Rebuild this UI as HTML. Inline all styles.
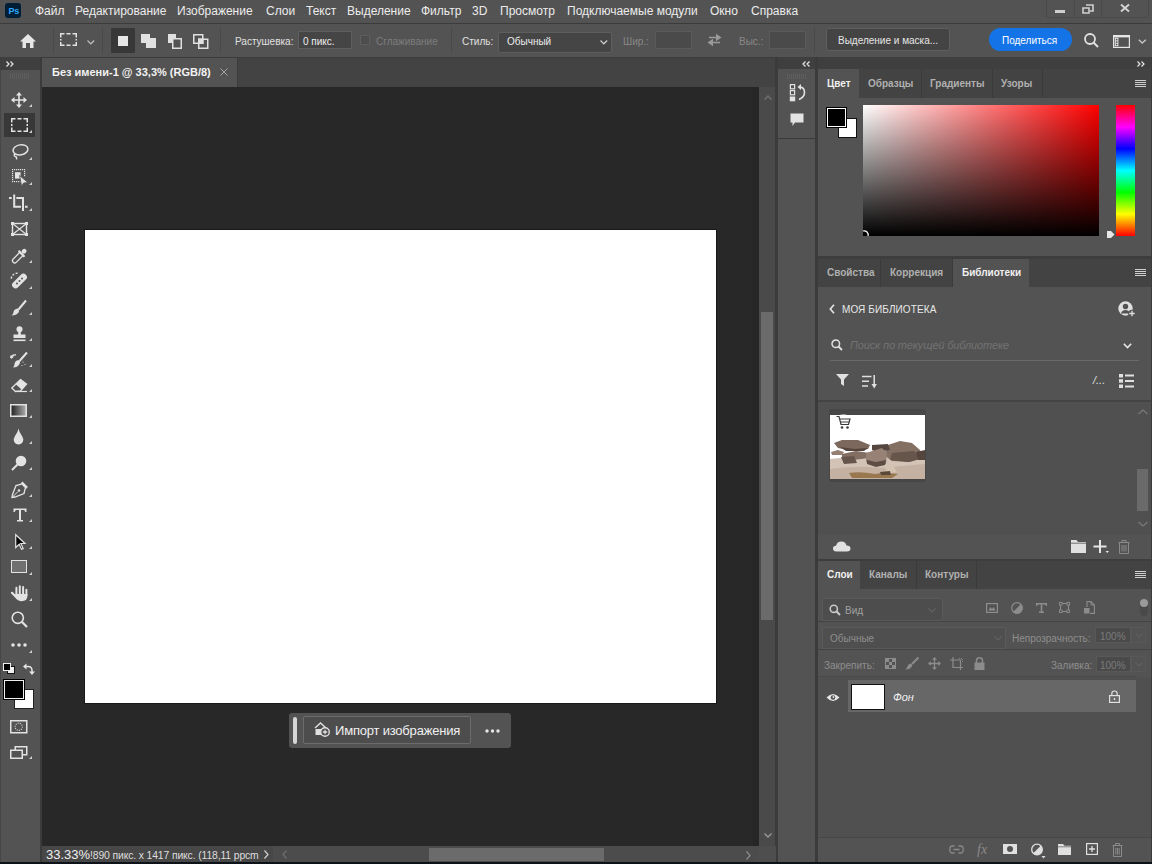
<!DOCTYPE html>
<html><head><meta charset="utf-8">
<style>
*{margin:0;padding:0;box-sizing:border-box}
html,body{width:1152px;height:864px;overflow:hidden;background:#535353;font-family:"Liberation Sans",sans-serif;color:#e6e6e6}
.a{position:absolute}
.t{position:absolute;white-space:nowrap;line-height:1}
svg{position:absolute;overflow:visible}
</style></head><body>
<!-- menu bar -->
<div class="a" style="left:0;top:0;width:1152px;height:23px;background:#535353"></div>
<div class="a" style="left:0;top:23px;width:1152px;height:1px;background:#3b3b3b"></div>
<!-- options bar -->
<div class="a" style="left:0;top:24px;width:1152px;height:33px;background:#535353"></div>
<div class="a" style="left:0;top:57px;width:1152px;height:1px;background:#3b3b3b"></div>
<!-- left toolbar -->
<div class="a" style="left:0;top:58px;width:41px;height:804px;background:#535353"></div>
<div class="a" style="left:0;top:57px;width:40px;height:13px;background:#3f3f3f"></div>
<div class="a" style="left:40px;top:58px;width:2px;height:804px;background:#3b3b3b"></div>
<!-- doc tab bar -->
<div class="a" style="left:42px;top:58px;width:734px;height:29px;background:#434343"></div>
<div class="a" style="left:42px;top:58px;width:195px;height:29px;background:#535353"></div>
<div class="a" style="left:237px;top:58px;width:1px;height:29px;background:#3b3b3b"></div>
<!-- pasteboard -->
<div class="a" style="left:42px;top:87px;width:717px;height:759px;background:#282828"></div>
<div class="a" style="left:753px;top:87px;width:6px;height:759px;background:#262626"></div>
<!-- canvas -->
<div class="a" style="left:84px;top:229px;width:633px;height:475px;background:#181818"></div>
<div class="a" style="left:85px;top:230px;width:631px;height:473px;background:#fff"></div>
<!-- vertical scrollbar -->
<div class="a" style="left:759px;top:87px;width:17px;height:759px;background:#4a4a4a"></div>
<div class="a" style="left:761px;top:312px;width:12px;height:308px;background:#6b6b6b"></div>
<div class="a" style="left:775px;top:58px;width:3px;height:804px;background:#3b3b3b"></div>
<!-- status bar -->
<div class="a" style="left:42px;top:846px;width:717px;height:16px;background:#474747"></div>
<div class="a" style="left:273px;top:846px;width:486px;height:16px;background:#4c4c4c"></div>
<div class="a" style="left:429px;top:848px;width:175px;height:13px;background:#6b6b6b"></div>
<div class="a" style="left:759px;top:846px;width:17px;height:16px;background:#4e4e4e"></div>
<div class="a" style="left:0;top:862px;width:1152px;height:2px;background:#0e1319"></div>
<!-- mid dock -->
<div class="a" style="left:778px;top:57px;width:37px;height:12px;background:#3f3f3f"></div>
<div class="a" style="left:778px;top:69px;width:37px;height:793px;background:#535353"></div>
<div class="a" style="left:778px;top:138px;width:37px;height:1px;background:#3b3b3b"></div>
<div class="a" style="left:815px;top:57px;width:3px;height:805px;background:#3b3b3b"></div>
<!-- right dock -->
<div class="a" style="left:818px;top:57px;width:334px;height:12px;background:#3f3f3f"></div>
<div class="a" style="left:818px;top:69px;width:333px;height:793px;background:#535353"></div>
<div class="a" style="left:1151px;top:57px;width:1px;height:805px;background:#3b3b3b"></div>
<!-- MENU CONTENT -->
<div class="a" style="left:5px;top:3px;width:16px;height:15px;background:#001e36;border-radius:3px"></div>
<div class="t" style="left:8.5px;top:6.5px;font-size:9px;font-weight:bold;color:#31a8ff;letter-spacing:-0.2px">Ps</div>
<div class="t" style="left:35px;top:5px;font-size:12px;color:#ececec">Файл</div>
<div class="t" style="left:75px;top:5px;font-size:12px;color:#ececec">Редактирование</div>
<div class="t" style="left:177px;top:5px;font-size:12px;color:#ececec">Изображение</div>
<div class="t" style="left:266px;top:5px;font-size:12px;color:#ececec">Слои</div>
<div class="t" style="left:306px;top:5px;font-size:12px;color:#ececec">Текст</div>
<div class="t" style="left:347px;top:5px;font-size:12px;color:#ececec">Выделение</div>
<div class="t" style="left:421px;top:5px;font-size:12px;color:#ececec">Фильтр</div>
<div class="t" style="left:472px;top:5px;font-size:12px;color:#ececec">3D</div>
<div class="t" style="left:500px;top:5px;font-size:12px;color:#ececec">Просмотр</div>
<div class="t" style="left:567px;top:5px;font-size:12px;color:#ececec">Подключаемые модули</div>
<div class="t" style="left:710px;top:5px;font-size:12px;color:#ececec">Окно</div>
<div class="t" style="left:751px;top:5px;font-size:12px;color:#ececec">Справка</div>
<!-- window controls -->
<div class="a" style="left:1046px;top:-2px;width:103px;height:20px;border:1px solid #4a4a4a;border-radius:3px"></div>
<div class="a" style="left:1074px;top:0;width:1px;height:17px;background:#4a4a4a"></div>
<div class="a" style="left:1101px;top:0;width:1px;height:17px;background:#4a4a4a"></div>
<div class="a" style="left:1055px;top:10px;width:10px;height:3px;background:#cfcfcf"></div>
<svg style="left:1082px;top:4px" width="12" height="10"><path d="M4 1h7v6h-3M1 4h6v5h-6z" fill="none" stroke="#cfcfcf" stroke-width="1.6"/></svg>
<svg style="left:1120px;top:4px" width="10" height="8"><path d="M1 0.5L9 7.5M9 0.5L1 7.5" stroke="#d6d6d6" stroke-width="1.8"/></svg>
<!-- OPTIONS BAR -->
<svg style="left:20px;top:34px" width="16" height="14"><path d="M8 0L16 7.5H13.5V14H10V9H6V14H2.5V7.5H0Z" fill="#e6e6e6"/></svg>
<div class="a" style="left:53px;top:27px;width:1px;height:27px;background:#4a4a4a"></div>
<svg style="left:60px;top:33px" width="18" height="14"><path d="M0.75 4.5V0.75H4.5M6.5 0.75H10.5M12.5 0.75H16.25V4.5M16.25 6V7.5M16.25 9V12.25H12.5M10.5 12.25H6.5M4.5 12.25H0.75V9M0.75 6V7.5" fill="none" stroke="#e0e0e0" stroke-width="1.5"/></svg>
<svg style="left:87px;top:40px" width="8" height="5"><path d="M0.5 0.5L3.8 3.8L7.2 0.5" fill="none" stroke="#bdbdbd" stroke-width="1.2"/></svg>
<div class="a" style="left:102px;top:27px;width:1px;height:27px;background:#4a4a4a"></div>
<div class="a" style="left:111px;top:28px;width:24px;height:25px;background:#383838;border-radius:1px"></div>
<div class="a" style="left:118px;top:36px;width:10px;height:10px;background:#e6e6e6"></div>
<svg style="left:141px;top:34px" width="16" height="15"><path d="M0 0H9V4H15V14H5V9H0Z" fill="#e0e0e0"/></svg>
<svg style="left:168px;top:34px" width="14" height="15"><path d="M0 0H8V4H4V9H0Z" fill="#e0e0e0"/><rect x="4.75" y="4.75" width="8.5" height="9.5" fill="none" stroke="#e0e0e0" stroke-width="1.5"/></svg>
<svg style="left:193px;top:34px" width="16" height="15"><rect x="0.75" y="0.75" width="9" height="8.5" fill="none" stroke="#e0e0e0" stroke-width="1.5"/><rect x="5.75" y="5.25" width="9" height="9" fill="none" stroke="#e0e0e0" stroke-width="1.5"/><rect x="5" y="4.5" width="5.5" height="5.5" fill="#e0e0e0"/></svg>
<div class="a" style="left:220px;top:27px;width:1px;height:27px;background:#4a4a4a"></div>
<div class="t" style="left:235px;top:37px;font-size:10px;color:#e0e0e0">Растушевка:</div>
<div class="a" style="left:298px;top:31px;width:54px;height:18px;background:#454545;border:1px solid #5e5e5e"></div>
<div class="t" style="left:303px;top:37px;font-size:10px;color:#ededed">0 пикс.</div>
<div class="a" style="left:360px;top:35px;width:10px;height:10px;border:1px solid #5e5e5e;background:#4d4d4d;border-radius:1px"></div>
<div class="t" style="left:376px;top:37px;font-size:10px;color:#7d7d7d">Сглаживание</div>
<div class="a" style="left:451px;top:27px;width:1px;height:27px;background:#4a4a4a"></div>
<div class="t" style="left:462px;top:37px;font-size:10px;color:#e0e0e0">Стиль:</div>
<div class="a" style="left:498px;top:32px;width:114px;height:21px;background:#454545;border:1px solid #5e5e5e;border-radius:2px"></div>
<div class="t" style="left:507px;top:37px;font-size:10px;color:#ededed">Обычный</div>
<svg style="left:600px;top:40px" width="8" height="5"><path d="M0.5 0.5L3.8 3.8L7.2 0.5" fill="none" stroke="#cfcfcf" stroke-width="1.2"/></svg>
<div class="t" style="left:623px;top:37px;font-size:10px;color:#888">Шир.:</div>
<div class="a" style="left:655px;top:31px;width:37px;height:18px;background:#4a4a4a;border:1px solid #5a5a5a"></div>
<svg style="left:707px;top:33px" width="15" height="14"><path d="M2 4.5H10M13 9.5H5" stroke="#9a9a9a" stroke-width="1.6"/><path d="M9 0.8L14.5 4.5L9 8.2ZM6 5.8L0.5 9.5L6 13.2Z" fill="#9a9a9a"/></svg>
<div class="t" style="left:739px;top:37px;font-size:10px;color:#888">Выс.:</div>
<div class="a" style="left:769px;top:31px;width:37px;height:18px;background:#4a4a4a;border:1px solid #5a5a5a"></div>
<div class="a" style="left:814px;top:27px;width:1px;height:27px;background:#4a4a4a"></div>
<div class="a" style="left:826px;top:28px;width:124px;height:23px;background:#444444;border:1px solid #5e5e5e;border-radius:3px"></div>
<div class="t" style="left:838px;top:36px;font-size:10px;color:#e6e6e6">Выделение и маска...</div>
<div class="a" style="left:989px;top:28px;width:83px;height:23px;background:#1473e6;border-radius:12px"></div>
<div class="t" style="left:1002px;top:36px;font-size:10px;color:#ffffff">Поделиться</div>
<svg style="left:1084px;top:33px" width="15" height="15"><circle cx="6" cy="6" r="5" fill="none" stroke="#e0e0e0" stroke-width="1.8"/><path d="M9.5 9.5L14 14" stroke="#e0e0e0" stroke-width="2"/></svg>
<svg style="left:1113px;top:35px" width="17" height="13"><rect x="0.6" y="0.6" width="15.8" height="11.8" fill="none" stroke="#e6e6e6" stroke-width="1.2"/><path d="M0.6 1.6H16.4" stroke="#e6e6e6" stroke-width="1.6"/><rect x="2.3" y="3.3" width="2.6" height="7.4" fill="none" stroke="#e6e6e6" stroke-width="1"/><path d="M2.3 5.8H4.9M2.3 8.3H4.9" stroke="#e6e6e6" stroke-width="0.9"/></svg>
<svg style="left:1138px;top:39px" width="9" height="5"><path d="M0.8 0.8L4.3 4L7.8 0.8" fill="none" stroke="#c6c6c6" stroke-width="1.4"/></svg>
<!-- TOOLBAR -->
<div class="a" style="left:0;top:70px;width:1px;height:792px;background:#464646"></div>
<svg style="left:6px;top:61px" width="8" height="6"><path d="M0.5 0.5L3 3L0.5 5.5M4.5 0.5L7 3L4.5 5.5" fill="none" stroke="#e8e8e8" stroke-width="1.2"/></svg>
<svg style="left:10px;top:73px" width="20" height="6"><path d="M0.5 0V6M2.5 0V6M4.5 0V6M6.5 0V6M8.5 0V6M10.5 0V6M12.5 0V6M14.5 0V6M16.5 0V6M18.5 0V6" stroke="#5d5d5d" stroke-width="1"/></svg>
<!-- move -->
<svg style="left:11px;top:92px" width="16" height="16"><path d="M8 1V15M1 8H15" stroke="#e3e3e3" stroke-width="1.6"/><path d="M8 0L11 3.5H5ZM8 16L11 12.5H5ZM0 8L3.5 5V11ZM16 8L12.5 5V11Z" fill="#e3e3e3"/></svg>
<svg style="left:29px;top:104px" width="3" height="3"><path d="M3 0V3H0Z" fill="#cfcfcf"/></svg>

<!-- marquee selected -->
<div class="a" style="left:4px;top:113px;width:31px;height:24px;background:#383838"></div>
<svg style="left:11px;top:118px" width="17" height="14"><path d="M0.75 4.5V0.75H4.5M6.5 0.75H10.5M12.5 0.75H16.25V4.5M16.25 6V8M16.25 9.5V13.25H12.5M10.5 13.25H6.5M4.5 13.25H0.75V9.5M0.75 6V8" fill="none" stroke="#e3e3e3" stroke-width="1.5"/></svg>
<svg style="left:29px;top:130px" width="3" height="3"><path d="M3 0V3H0Z" fill="#cfcfcf"/></svg>

<!-- lasso -->
<svg style="left:12px;top:144px" width="17" height="16"><ellipse cx="8.5" cy="5.8" rx="7.5" ry="5" fill="none" stroke="#e3e3e3" stroke-width="1.5" transform="rotate(-10 8.5 5.8)"/><path d="M3 9.5Q1 12 3.5 12.5Q5 13 4.5 15.5" fill="none" stroke="#e3e3e3" stroke-width="1.4"/></svg>
<svg style="left:29px;top:157px" width="3" height="3"><path d="M3 0V3H0Z" fill="#cfcfcf"/></svg>

<!-- object select -->
<svg style="left:11px;top:168px" width="18" height="19"><g fill="#e3e3e3"><rect x="1" y="1" width="1.2" height="1.2"/><rect x="3" y="1" width="1.2" height="1.2"/><rect x="5" y="1" width="1.2" height="1.2"/><rect x="7" y="1" width="1.2" height="1.2"/><rect x="9" y="1" width="1.2" height="1.2"/><rect x="11" y="1" width="1.2" height="1.2"/><rect x="13" y="1" width="1.2" height="1.2"/><rect x="1" y="3" width="1.2" height="1.2"/><rect x="13" y="3" width="1.2" height="1.2"/><rect x="1" y="5" width="1.2" height="1.2"/><rect x="13" y="5" width="1.2" height="1.2"/><rect x="1" y="7" width="1.2" height="1.2"/><rect x="13" y="7" width="1.2" height="1.2"/><rect x="1" y="9" width="1.2" height="1.2"/><rect x="1" y="11" width="1.2" height="1.2"/><rect x="1" y="13" width="1.2" height="1.2"/><rect x="3" y="13" width="1.2" height="1.2"/><rect x="5" y="13" width="1.2" height="1.2"/><rect x="7" y="13" width="1.2" height="1.2"/><rect x="9" y="13" width="1.2" height="1.2"/></g><rect x="4" y="4.2" width="5.6" height="6.4" fill="#e3e3e3"/><path d="M8.6 7.5L17 14.6L12.6 15L10.6 18.5Z" fill="#e3e3e3" stroke="#535353" stroke-width="0.9"/></svg>
<svg style="left:29px;top:182px" width="3" height="3"><path d="M3 0V3H0Z" fill="#cfcfcf"/></svg>

<!-- crop -->
<svg style="left:9px;top:194px" width="20" height="18"><path d="M0 4H2.7M5.2 0.5V13.7M4.2 12.75H12M7.3 4H15M14 3V17M16 12.75H18.6" fill="none" stroke="#e3e3e3" stroke-width="2"/></svg>
<svg style="left:29px;top:208px" width="3" height="3"><path d="M3 0V3H0Z" fill="#cfcfcf"/></svg>

<!-- frame -->
<svg style="left:11px;top:222px" width="17" height="14"><rect x="1.5" y="1.5" width="14" height="11" fill="none" stroke="#e3e3e3" stroke-width="1.4"/><path d="M1.5 1.5L15.5 12.5M15.5 1.5L1.5 12.5" stroke="#e3e3e3" stroke-width="1.2"/><rect x="0" y="0" width="3" height="3" fill="#e3e3e3"/><rect x="14" y="0" width="3" height="3" fill="#e3e3e3"/><rect x="0" y="11" width="3" height="3" fill="#e3e3e3"/><rect x="14" y="11" width="3" height="3" fill="#e3e3e3"/></svg>

<!-- eyedropper -->
<svg style="left:11px;top:248px" width="16" height="16"><g transform="rotate(45 8 8)"><rect x="6" y="-1.5" width="4.5" height="5" rx="2.2" fill="#e3e3e3"/><rect x="4" y="3.5" width="8.5" height="2.2" rx="0.5" fill="#e3e3e3"/><path d="M6 5.5V14.5Q6 16.5 8.25 16.5Q10.5 16.5 10.5 14.5V5.5" fill="none" stroke="#e3e3e3" stroke-width="1.3"/></g></svg>
<svg style="left:29px;top:260px" width="3" height="3"><path d="M3 0V3H0Z" fill="#cfcfcf"/></svg>

<!-- healing -->
<svg style="left:10px;top:272px" width="17" height="17"><path d="M7.5 1.2A6 6 0 0 0 1.2 7.5" fill="none" stroke="#e3e3e3" stroke-width="1.4" stroke-dasharray="2 1.5"/><rect x="0.5" y="5.5" width="18" height="7" rx="3.5" fill="#e3e3e3" transform="rotate(-45 9.5 9)"/><circle cx="7" cy="11.5" r="1" fill="#535353"/><circle cx="9.5" cy="9" r="1" fill="#535353"/><circle cx="12" cy="6.5" r="1" fill="#535353"/></svg>
<svg style="left:29px;top:286px" width="3" height="3"><path d="M3 0V3H0Z" fill="#cfcfcf"/></svg>

<!-- brush -->
<svg style="left:11px;top:300px" width="16" height="16"><path d="M15 0.5L7.5 9.5" stroke="#e3e3e3" stroke-width="2"/><path d="M6.5 8.5Q9 10 7.5 12.5Q5.5 15.5 0.5 15.5Q2.5 14 2.5 12Q3 9 6.5 8.5Z" fill="#e3e3e3"/></svg>
<svg style="left:29px;top:312px" width="3" height="3"><path d="M3 0V3H0Z" fill="#cfcfcf"/></svg>

<!-- stamp -->
<svg style="left:12px;top:326px" width="15" height="16"><circle cx="7.5" cy="3.2" r="3" fill="#e3e3e3"/><path d="M6.2 5.5H8.8V8.5H13.5V12H1.5V8.5H6.2Z" fill="#e3e3e3"/><rect x="1.5" y="13.5" width="12" height="1.6" fill="#e3e3e3"/></svg>
<svg style="left:29px;top:338px" width="3" height="3"><path d="M3 0V3H0Z" fill="#cfcfcf"/></svg>

<!-- history brush -->
<svg style="left:10px;top:352px" width="18" height="16"><path d="M17 0.5L9.5 9" stroke="#e3e3e3" stroke-width="2"/><path d="M8.5 8Q11 9.5 9.5 12Q7.5 15.5 3 15.5Q4.5 14 4.5 12Q5 8.5 8.5 8Z" fill="#e3e3e3"/><path d="M0.5 6Q2 2 6 3" fill="none" stroke="#e3e3e3" stroke-width="1.3"/><path d="M0 3.5L1.5 7L4 4.5Z" fill="#e3e3e3"/><circle cx="13" cy="10" r="0.6" fill="#e3e3e3"/><circle cx="15" cy="12.5" r="0.6" fill="#e3e3e3"/><circle cx="12" cy="13.5" r="0.6" fill="#e3e3e3"/></svg>
<svg style="left:29px;top:364px" width="3" height="3"><path d="M3 0V3H0Z" fill="#cfcfcf"/></svg>

<!-- eraser -->
<svg style="left:11px;top:379px" width="17" height="13"><path d="M9.5 0.5L15.5 5L9.5 12L4.5 12.5L0.8 9Z" fill="none" stroke="#e3e3e3" stroke-width="1.3"/><path d="M9.5 0.5L15.5 5L10.5 10.5L4.5 5Z" fill="#e3e3e3"/><path d="M4.5 12.5H16" stroke="#e3e3e3" stroke-width="1.2"/></svg>
<svg style="left:29px;top:389px" width="3" height="3"><path d="M3 0V3H0Z" fill="#cfcfcf"/></svg>

<!-- gradient -->
<svg style="left:10px;top:404px" width="17" height="13"><defs><linearGradient id="gr" x1="0" x2="1" y1="0" y2="0"><stop offset="0" stop-color="#1e1e1e"/><stop offset="1" stop-color="#b0b0b0"/></linearGradient></defs><rect x="0.75" y="0.75" width="15.5" height="11.5" fill="url(#gr)" stroke="#e3e3e3" stroke-width="1.5"/></svg>
<svg style="left:29px;top:415px" width="3" height="3"><path d="M3 0V3H0Z" fill="#cfcfcf"/></svg>

<!-- blur drop -->
<svg style="left:13px;top:428px" width="12" height="17"><path d="M5.5 0.5Q6 4 9 8Q11 11 10 13.5Q8.5 16.5 5.5 16.5Q2.5 16.5 1 13.5Q0 11 2 8Q5 4 5.5 0.5Z" fill="#e3e3e3"/></svg>
<svg style="left:29px;top:441px" width="3" height="3"><path d="M3 0V3H0Z" fill="#cfcfcf"/></svg>

<!-- dodge -->
<svg style="left:11px;top:455px" width="16" height="16"><circle cx="10" cy="6" r="5.3" fill="#e3e3e3"/><path d="M6.5 9.5L1 15" stroke="#e3e3e3" stroke-width="2"/></svg>
<svg style="left:29px;top:467px" width="3" height="3"><path d="M3 0V3H0Z" fill="#cfcfcf"/></svg>

<!-- pen -->
<svg style="left:11px;top:482px" width="17" height="16"><path d="M11.5 0.5L16 5L14 7L13 11.5L4 15L1 15.5L1.5 12.5L5 3.5L9.5 2.5Z" fill="none" stroke="#e3e3e3" stroke-width="1.3"/><path d="M11.5 0.5L16 5L14.5 6.5L10 2Z" fill="#e3e3e3"/><path d="M1.5 15L7 9.5" stroke="#e3e3e3" stroke-width="1"/><circle cx="8" cy="8.5" r="1.2" fill="#e3e3e3"/></svg>
<svg style="left:29px;top:494px" width="3" height="3"><path d="M3 0V3H0Z" fill="#cfcfcf"/></svg>

<!-- type -->
<svg style="left:13px;top:508px" width="14" height="14"><path d="M0.5 0.5H13.5V4H12.2Q12 2 10.5 2H8V12H10V13.5H4V12H6V2H3.5Q2 2 1.8 4H0.5Z" fill="#e3e3e3"/></svg>
<svg style="left:29px;top:519px" width="3" height="3"><path d="M3 0V3H0Z" fill="#cfcfcf"/></svg>

<!-- path select -->
<svg style="left:15px;top:534px" width="11" height="16"><path d="M0.7 0.7L10 9.5H5.8L8.2 14.6L6.5 15.3L4.2 10.2L0.7 13.5Z" fill="#050505" stroke="#e3e3e3" stroke-width="1.2"/></svg>
<svg style="left:29px;top:546px" width="3" height="3"><path d="M3 0V3H0Z" fill="#cfcfcf"/></svg>

<!-- rectangle -->
<div class="a" style="left:11px;top:560px;width:16px;height:13px;background:#707070;border:1.5px solid #e3e3e3"></div>
<svg style="left:29px;top:572px" width="3" height="3"><path d="M3 0V3H0Z" fill="#cfcfcf"/></svg>

<!-- hand -->
<svg style="left:11px;top:585px" width="17" height="17"><path d="M5.4 2.8V10M8.8 1.2V10M12.1 2V10M15.4 4.8V10.5" stroke="#e3e3e3" stroke-width="2" stroke-linecap="round"/><path d="M4.3 9H16.4V11Q16.4 16.2 10.5 16.2Q7.5 16.2 6 14L4.3 11Z" fill="#e3e3e3"/><path d="M1 7.8L6.5 13.5" stroke="#e3e3e3" stroke-width="2.2" stroke-linecap="round"/></svg>
<svg style="left:29px;top:598px" width="3" height="3"><path d="M3 0V3H0Z" fill="#cfcfcf"/></svg>

<!-- zoom -->
<svg style="left:11px;top:611px" width="17" height="17"><circle cx="6.8" cy="6.8" r="5.6" fill="none" stroke="#e3e3e3" stroke-width="1.6"/><path d="M10.8 10.8L16 16" stroke="#e3e3e3" stroke-width="2.2"/></svg>
<!-- more -->
<svg style="left:11px;top:643px" width="16" height="5"><circle cx="2" cy="2" r="1.8" fill="#e3e3e3"/><circle cx="8" cy="2" r="1.8" fill="#e3e3e3"/><circle cx="14" cy="2" r="1.8" fill="#e3e3e3"/></svg>
<svg style="left:29px;top:650px" width="3" height="3"><path d="M3 0V3H0Z" fill="#cfcfcf"/></svg>

<!-- small fg/bg -->
<div class="a" style="left:7px;top:666px;width:8px;height:8px;background:#f0f0f0;border:1px solid #111"></div>
<div class="a" style="left:3px;top:663px;width:8px;height:8px;background:#000;border:1px solid #f0f0f0"></div>
<svg style="left:23px;top:663px" width="11" height="12"><path d="M1.5 3.5H5Q9 3.5 9 7.5V9" fill="none" stroke="#e3e3e3" stroke-width="1.5"/><path d="M3.5 0.5L0 3.5L3.5 6.5ZM6 8.5L9 12L12 8.5Z" fill="#e3e3e3"/></svg>
<!-- fg/bg -->
<div class="a" style="left:14px;top:689px;width:20px;height:20px;background:#fff;border:1px solid #222"></div>
<div class="a" style="left:4px;top:680px;width:20px;height:19px;background:#000;border:1px solid #f0f0f0;outline:1px solid #000"></div>
<!-- quick mask -->
<svg style="left:10px;top:720px" width="18" height="14"><rect x="0.75" y="0.75" width="16" height="12" fill="none" stroke="#e3e3e3" stroke-width="1.5"/><circle cx="8.75" cy="6.75" r="3.6" fill="none" stroke="#e3e3e3" stroke-width="1.1" stroke-dasharray="1 1.2"/></svg>
<!-- screen mode -->
<svg style="left:10px;top:746px" width="18" height="13"><rect x="5.25" y="0.75" width="11.5" height="8" fill="none" stroke="#e3e3e3" stroke-width="1.5"/><rect x="0.75" y="4.25" width="11.5" height="8" fill="#535353" stroke="#e3e3e3" stroke-width="1.5"/></svg>
<svg style="left:29px;top:756px" width="3" height="3"><path d="M3 0V3H0Z" fill="#cfcfcf"/></svg>

<!-- DOC TAB etc -->
<div class="t" style="left:52px;top:67px;font-size:11px;font-weight:bold;color:#f2f2f2">Без имени-1 @ 33,3% (RGB/8)</div>
<svg style="left:220px;top:68px" width="8" height="8"><path d="M0.5 0.5L7.5 7.5M7.5 0.5L0.5 7.5" stroke="#a8a8a8" stroke-width="1"/></svg>
<!-- scroll arrows -->
<svg style="left:764px;top:95px" width="8" height="5"><path d="M0.5 4.5L4 1L7.5 4.5" fill="none" stroke="#6e6e6e" stroke-width="1.5"/></svg>
<svg style="left:764px;top:833px" width="8" height="5"><path d="M0.5 0.5L4 4L7.5 0.5" fill="none" stroke="#9a9a9a" stroke-width="1.3"/></svg>
<svg style="left:282px;top:850px" width="5" height="9"><path d="M4.5 0.5L1 4.5L4.5 8.5" fill="none" stroke="#6e6e6e" stroke-width="1.3"/></svg>
<svg style="left:746px;top:851px" width="5" height="9"><path d="M0.5 0.5L4 4.5L0.5 8.5" fill="none" stroke="#8a8a8a" stroke-width="1.3"/></svg>
<!-- status -->
<div class="t" style="left:46px;top:848px;font-size:13px;color:#f0f0f0">33.33%</div>
<div class="t" style="left:90px;top:850.5px;font-size:10.4px;letter-spacing:-0.13px;color:#dedede">!890 пикс. x 1417 пикс. (118,11 ppcm</div>
<svg style="left:264px;top:850px" width="5" height="9"><path d="M0.5 0.5L4 4.5L0.5 8.5" fill="none" stroke="#d0d0d0" stroke-width="1.2"/></svg>
<!-- import bar -->
<div class="a" style="left:289px;top:713px;width:222px;height:35px;background:#535353;border-radius:3px"></div>
<div class="a" style="left:293px;top:717px;width:4px;height:27px;background:#d6d6d6;border-radius:2px"></div>
<div class="a" style="left:303px;top:716px;width:168px;height:28px;background:#4d4d4d;border:1px solid #6c6c6c;border-radius:2px"></div>
<svg style="left:314px;top:722px" width="16" height="15"><path d="M1 6L6.5 1L12 6" fill="none" stroke="#e0e0e0" stroke-width="1.4"/><rect x="1.5" y="7" width="7" height="6" fill="#e0e0e0"/><circle cx="11" cy="10" r="4.3" fill="#4d4d4d" stroke="#e0e0e0" stroke-width="1.4"/><path d="M11 7.8V12.2M8.8 10H13.2" stroke="#e0e0e0" stroke-width="1.3"/></svg>
<div class="t" style="left:335px;top:724px;font-size:13px;letter-spacing:-0.2px;color:#f0f0f0">Импорт изображения</div>
<svg style="left:485px;top:729px" width="15" height="4"><circle cx="2" cy="2" r="1.7" fill="#e6e6e6"/><circle cx="7.5" cy="2" r="1.7" fill="#e6e6e6"/><circle cx="13" cy="2" r="1.7" fill="#e6e6e6"/></svg>
<!-- mid dock -->
<svg style="left:802px;top:61px" width="8" height="6"><path d="M3.5 0.5L1 3L3.5 5.5M7.5 0.5L5 3L7.5 5.5" fill="none" stroke="#e8e8e8" stroke-width="1.2"/></svg>
<svg style="left:787px;top:74px" width="20" height="5"><path d="M0.5 0V5M2.5 0V5M4.5 0V5M6.5 0V5M8.5 0V5M10.5 0V5M12.5 0V5M14.5 0V5M16.5 0V5M18.5 0V5" stroke="#5e5e5e" stroke-width="1"/></svg>
<svg style="left:789px;top:84px" width="17" height="18"><rect x="1.4" y="0.6" width="4.2" height="4.2" fill="none" stroke="#e3e3e3" stroke-width="1.2"/><rect x="1.4" y="6.6" width="4.2" height="4.2" fill="none" stroke="#e3e3e3" stroke-width="1.2"/><rect x="0.8" y="12.5" width="5.4" height="4.8" fill="#e3e3e3"/><path d="M11 3Q15.5 3.5 15.5 8.5Q15.5 13 10 15.5" fill="none" stroke="#e3e3e3" stroke-width="1.6"/><path d="M8.5 3L12 0V6Z" fill="#e3e3e3"/></svg>
<svg style="left:790px;top:113px" width="14" height="14"><path d="M0.5 0.5H13.5V9.5H5L2.5 13V9.5H0.5Z" fill="#e3e3e3"/></svg>
<!-- right dock collapse -->
<svg style="left:1137px;top:61px" width="8" height="6"><path d="M0.5 0.5L3 3L0.5 5.5M4.5 0.5L7 3L4.5 5.5" fill="none" stroke="#e8e8e8" stroke-width="1.2"/></svg>
<!-- RIGHT PANELS -->
<!-- color panel tabs -->
<div class="a" style="left:818px;top:69px;width:333px;height:29px;background:#434343"></div>
<div class="a" style="left:818px;top:69px;width:41px;height:29px;background:#535353"></div>
<div class="a" style="left:921px;top:69px;width:1px;height:29px;background:#3b3b3b"></div>
<div class="a" style="left:992px;top:69px;width:1px;height:29px;background:#3b3b3b"></div>
<div class="a" style="left:1042px;top:69px;width:1px;height:29px;background:#3b3b3b"></div>
<div class="t" style="left:827px;top:79px;font-size:10px;font-weight:bold;color:#f0f0f0">Цвет</div>
<div class="t" style="left:868px;top:79px;font-size:10px;font-weight:bold;color:#b0b0b0">Образцы</div>
<div class="t" style="left:930px;top:79px;font-size:10px;font-weight:bold;color:#b0b0b0">Градиенты</div>
<div class="t" style="left:1001px;top:79px;font-size:10px;font-weight:bold;color:#b0b0b0">Узоры</div>
<svg style="left:1135px;top:80px" width="11" height="8"><path d="M0 0.5H11M0 2.5H11M0 4.5H11M0 6.5H11" stroke="#cfcfcf" stroke-width="1"/></svg>

<!-- color content -->
<div class="a" style="left:838px;top:118px;width:19px;height:20px;background:#fff;border:1px solid #111"></div>
<div class="a" style="left:826px;top:107px;width:21px;height:21px;background:#000;border:1px solid #000;box-shadow:inset 0 0 0 1px #fff"></div>
<div class="a" style="left:827px;top:108px;width:19px;height:19px;border:1px solid #fff"></div>
<div class="a" style="left:863px;top:105px;width:236px;height:131px;background:linear-gradient(to bottom,rgba(0,0,0,0),#000),linear-gradient(to right,#fff,#f00)"></div>
<svg style="left:862px;top:230px" width="8" height="8"><path d="M1 1A4 4 0 0 1 6 6" fill="none" stroke="#fff" stroke-width="1.2"/></svg>
<div class="a" style="left:1116px;top:105px;width:19px;height:131px;background:linear-gradient(to bottom,#f00 0%,#f0f 16.7%,#00f 33.3%,#0ff 50%,#0f0 66.7%,#ff0 83.3%,#f00 100%)"></div>
<svg style="left:1106px;top:230px" width="9" height="9"><path d="M1 1H5L8.5 4.5L5 8H1Z" fill="#e6e6e6"/></svg>
<!-- separator -->
<div class="a" style="left:818px;top:256px;width:333px;height:3px;background:#3d3d3d"></div>
<!-- library tabs -->
<div class="a" style="left:818px;top:259px;width:333px;height:28px;background:#434343"></div>
<div class="a" style="left:953px;top:259px;width:76px;height:28px;background:#535353"></div>
<div class="a" style="left:880px;top:259px;width:1px;height:28px;background:#3b3b3b"></div>
<div class="a" style="left:952px;top:259px;width:1px;height:28px;background:#3b3b3b"></div>
<div class="t" style="left:827px;top:268px;font-size:10px;font-weight:bold;color:#b0b0b0">Свойства</div>
<div class="t" style="left:890px;top:268px;font-size:10px;font-weight:bold;color:#b0b0b0">Коррекция</div>
<div class="t" style="left:962px;top:268px;font-size:10px;font-weight:bold;color:#f0f0f0">Библиотеки</div>
<svg style="left:1135px;top:269px" width="11" height="8"><path d="M0 0.5H11M0 2.5H11M0 4.5H11M0 6.5H11" stroke="#cfcfcf" stroke-width="1"/></svg>

<!-- library header -->
<svg style="left:829px;top:304px" width="6" height="10"><path d="M5 0.8L1.3 5L5 9.2" fill="none" stroke="#e6e6e6" stroke-width="1.6"/></svg>
<div class="t" style="left:842px;top:305px;font-size:10px;letter-spacing:0.1px;color:#e8e8e8">МОЯ БИБЛИОТЕКА</div>
<svg style="left:1118px;top:301px" width="18" height="16"><circle cx="7.5" cy="7.5" r="7.2" fill="#e0e0e0"/><circle cx="7.5" cy="5.5" r="2.7" fill="#535353"/><path d="M2.8 12.5Q4 9 7.5 9Q11 9 12.2 12.5" fill="#535353"/><circle cx="14" cy="12.5" r="3.8" fill="#535353"/><path d="M14 9.8V15.2M11.3 12.5H16.7" stroke="#e0e0e0" stroke-width="1.3"/></svg>
<svg style="left:831px;top:339px" width="12" height="12"><circle cx="4.8" cy="4.8" r="3.8" fill="none" stroke="#e0e0e0" stroke-width="1.5"/><path d="M7.5 7.5L11 11" stroke="#e0e0e0" stroke-width="1.8"/></svg>
<div class="t" style="left:850px;top:340px;font-size:11px;letter-spacing:-0.15px;font-style:italic;color:#727272">Поиск по текущей библиотеке</div>
<svg style="left:1123px;top:343px" width="9" height="6"><path d="M0.8 0.8L4.5 4.5L8.2 0.8" fill="none" stroke="#e6e6e6" stroke-width="1.6"/></svg>
<div class="a" style="left:830px;top:360px;width:309px;height:1px;background:#6a6a6a"></div>
<svg style="left:836px;top:374px" width="13" height="12"><path d="M0 0H13L8 5.5V12L5 10V5.5Z" fill="#e0e0e0"/></svg>
<svg style="left:862px;top:374px" width="16" height="15"><path d="M0 2.5H9.5M0 7.25H7M0 12H6" stroke="#e0e0e0" stroke-width="1.5"/><path d="M12.2 1V12" stroke="#e0e0e0" stroke-width="1.5"/><path d="M9.5 10L12.2 14.5L14.9 10Z" fill="#e0e0e0"/></svg>
<div class="t" style="left:1093px;top:375px;font-size:11px;font-style:italic;color:#e0e0e0">/...</div>
<svg style="left:1119px;top:374px" width="15" height="14"><rect x="0" y="0" width="4" height="3.5" fill="#e0e0e0"/><rect x="0" y="5.2" width="4" height="3.5" fill="#e0e0e0"/><rect x="0" y="10.5" width="4" height="3.5" fill="#e0e0e0"/><rect x="6" y="0.5" width="9" height="2" fill="#e0e0e0"/><rect x="6" y="6" width="9" height="2" fill="#e0e0e0"/><rect x="6" y="11.5" width="9" height="2" fill="#e0e0e0"/></svg>
<div class="a" style="left:818px;top:400px;width:333px;height:2px;background:#444"></div>
<!-- library content -->
<div class="a" style="left:818px;top:402px;width:333px;height:133px;background:#505050"></div>
<div class="a" style="left:829px;top:409px;width:97px;height:73px;background:#474747;border-radius:3px"></div>
<svg style="left:830px;top:415px" width="95" height="64"><defs><filter id="bl"><feGaussianBlur stdDeviation="0.6"/></filter></defs><rect width="95" height="64" fill="#fff"/>
<g filter="url(#bl)">
<path d="M0 44Q20 41 40 44Q70 39 95 37V64H0Z" fill="#d3c3b6"/>
<path d="M0 54Q30 50 50 53Q70 51 95 49V64H0Z" fill="#c4b1a2"/>
<path d="M58 30L70 26L82 28L90 35L93 43L80 47L62 46L54 40Z" fill="#836f64"/>
<path d="M62 38L84 36L90 44L78 47L60 45Z" fill="#66544b"/>
<path d="M86 37L95 35V45L88 45Z" fill="#54443c"/>
<path d="M4 28L12 25L28 25L40 30L38 34L22 36L8 33Z" fill="#7b675c"/>
<path d="M10 32L24 34L38 33L34 36L16 36Z" fill="#54443d"/>
<path d="M42 30L58 29L60 35L46 37L42 35Z" fill="#55463f"/>
<path d="M1 37L8 35L14 37L12 40L2 40Z" fill="#957f72"/>
<path d="M12 39L26 36L40 38L40 43L22 45L12 42Z" fill="#826e62"/>
<path d="M11 42L24 41L27 48L14 49Z" fill="#66544b"/>
<path d="M36 38L52 33L57 38L56 49L46 51L36 47Z" fill="#978275"/>
<path d="M37 45L46 47L56 45L55 50L46 52L37 49Z" fill="#5e4d45"/>
<path d="M19 58Q30 56 45 59Q55 57 68 59L62 63H22Z" fill="#9a7850"/>
<path d="M54 51L62 49L67 57L58 59Z" fill="#d4c3b1"/>
<path d="M50 57L60 56L61 60L51 60Z" fill="#5a4a38"/>
</g></svg>
<svg style="left:836px;top:415px" width="15" height="15"><ellipse cx="7.5" cy="3" rx="7" ry="3.5" fill="#fff"/><path d="M0.5 1.5H3L5 9.5H12.5L14 4H4" fill="none" stroke="#3a3a3a" stroke-width="1.2"/><path d="M4.5 7H13" stroke="#3a3a3a" stroke-width="1"/><circle cx="6" cy="12.5" r="1.3" fill="#3a3a3a"/><circle cx="11.5" cy="12.5" r="1.3" fill="#3a3a3a"/></svg>
<svg style="left:1138px;top:409px" width="10" height="6"><path d="M0.5 5L5 1L9.5 5" fill="none" stroke="#7a7a7a" stroke-width="1.2"/></svg>
<div class="a" style="left:1137px;top:469px;width:11px;height:42px;background:#6a6a6a"></div>
<svg style="left:1138px;top:521px" width="10" height="6"><path d="M0.5 1L5 5L9.5 1" fill="none" stroke="#7a7a7a" stroke-width="1.2"/></svg>
<!-- library footer -->
<div class="a" style="left:818px;top:535px;width:333px;height:24px;background:#535353"></div>
<svg style="left:833px;top:541px" width="18" height="11"><path d="M3.5 10.5Q0 10.5 0 7.5Q0 5 3 4.8Q4 0.5 8.5 0.5Q12.5 0.5 13.5 4.5Q17.5 4.5 17.5 7.5Q17.5 10.5 14 10.5Z" fill="#e0e0e0"/></svg>
<svg style="left:1071px;top:540px" width="15" height="13"><path d="M0 0H5.5L7 2H15V13H0Z" fill="#e0e0e0"/><path d="M0 3.2H15" stroke="#535353" stroke-width="0.8"/></svg>
<svg style="left:1093px;top:540px" width="16" height="14"><path d="M7 0V13M0.5 6.5H13.5" stroke="#e6e6e6" stroke-width="2"/><path d="M12.5 11H16L14.25 13Z" fill="#e6e6e6"/></svg>
<svg style="left:1118px;top:540px" width="12" height="14"><path d="M0.5 2.5H11.5M4 2.5V0.5H8V2.5M1.5 3V13.5H10.5V3M4 5V11.5M6 5V11.5M8 5V11.5" fill="none" stroke="#8a8a8a" stroke-width="1"/></svg>
<div class="a" style="left:818px;top:559px;width:333px;height:2px;background:#3d3d3d"></div>
<!-- layers tabs -->
<div class="a" style="left:818px;top:561px;width:333px;height:28px;background:#434343"></div>
<div class="a" style="left:818px;top:561px;width:42px;height:28px;background:#535353"></div>
<div class="a" style="left:916px;top:561px;width:1px;height:28px;background:#3b3b3b"></div>
<div class="a" style="left:976px;top:561px;width:1px;height:28px;background:#3b3b3b"></div>
<div class="t" style="left:827px;top:570px;font-size:10px;font-weight:bold;color:#f0f0f0">Слои</div>
<div class="t" style="left:869px;top:570px;font-size:10px;font-weight:bold;color:#b0b0b0">Каналы</div>
<div class="t" style="left:925px;top:570px;font-size:10px;font-weight:bold;color:#b0b0b0">Контуры</div>
<svg style="left:1135px;top:571px" width="11" height="8"><path d="M0 0.5H11M0 2.5H11M0 4.5H11M0 6.5H11" stroke="#cfcfcf" stroke-width="1"/></svg>

<!-- LAYERS CONTENT -->
<div class="a" style="left:822px;top:598px;width:121px;height:23px;background:#4d4d4d;border:1px solid #5a5a5a;border-radius:2px"></div>
<svg style="left:829px;top:604px" width="12" height="12"><circle cx="4.8" cy="4.8" r="3.6" fill="none" stroke="#c8c8c8" stroke-width="1.6"/><path d="M7.3 7.3L11 11" stroke="#c8c8c8" stroke-width="2"/></svg>
<div class="t" style="left:845px;top:606px;font-size:10px;color:#a0a0a0">Вид</div>
<svg style="left:928px;top:608px" width="8" height="5"><path d="M0.5 0.5L4 4L7.5 0.5" fill="none" stroke="#626262" stroke-width="1.2"/></svg>
<svg style="left:986px;top:603px" width="12" height="10"><rect x="0.6" y="0.6" width="10.8" height="8.8" fill="none" stroke="#8c8c8c" stroke-width="1.2"/><path d="M2.5 7.5L4.5 4L6 6L7.5 4L9.5 7.5Z" fill="#8c8c8c"/></svg>
<svg style="left:1011px;top:602px" width="12" height="12"><circle cx="6" cy="6" r="5.3" fill="none" stroke="#8c8c8c" stroke-width="1.2"/><path d="M10 2A5.3 5.3 0 0 1 2 10Z" fill="#8c8c8c"/></svg>
<svg style="left:1036px;top:603px" width="11" height="10"><path d="M0 0H11V3H10Q9.7 1.5 8.5 1.5H6.3V8.5H8V10H3V8.5H4.7V1.5H2.5Q1.3 1.5 1 3H0Z" fill="#8c8c8c"/></svg>
<svg style="left:1059px;top:602px" width="11" height="11"><rect x="1.5" y="1.5" width="8" height="8" fill="none" stroke="#8c8c8c" stroke-width="1"/><g fill="#535353" stroke="#8c8c8c" stroke-width="0.9"><rect x="0.45" y="0.45" width="2.6" height="2.6"/><rect x="7.95" y="0.45" width="2.6" height="2.6"/><rect x="0.45" y="7.95" width="2.6" height="2.6"/><rect x="7.95" y="7.95" width="2.6" height="2.6"/></g></svg>
<svg style="left:1084px;top:601px" width="11" height="13"><path d="M3 6V0.6H7L10.4 4V12.4H6" fill="none" stroke="#8c8c8c" stroke-width="1.1"/><path d="M7 0.6V4H10.4" fill="none" stroke="#8c8c8c" stroke-width="1"/><rect x="0" y="7" width="5.5" height="5.5" fill="#8c8c8c"/></svg>
<div class="a" style="left:1140px;top:599px;width:8px;height:17px;background:#4a4a4a;border-radius:4px"></div>
<div class="a" style="left:1140px;top:599px;width:8px;height:8px;background:#9a9a9a;border-radius:4px"></div>
<div class="a" style="left:818px;top:621px;width:333px;height:1px;background:#444"></div>
<div class="a" style="left:822px;top:627px;width:184px;height:22px;background:#4f4f4f;border:1px solid #5a5a5a"></div>
<div class="t" style="left:830px;top:634px;font-size:10px;color:#8e8e8e">Обычные</div>
<svg style="left:994px;top:636px" width="8" height="5"><path d="M0.5 0.5L4 4L7.5 0.5" fill="none" stroke="#606060" stroke-width="1.2"/></svg>
<div class="t" style="left:1012px;top:634px;font-size:10px;color:#8e8e8e">Непрозрачность:</div>
<div class="a" style="left:1095px;top:627px;width:36px;height:16px;background:#4a4a4a;border:1px solid #585858"></div>
<div class="t" style="left:1100px;top:632px;font-size:10px;color:#7a7a7a">100%</div>
<div class="a" style="left:1131px;top:627px;width:15px;height:16px;border:1px solid #585858"></div>
<svg style="left:1135px;top:633px" width="8" height="5"><path d="M0.5 0.5L4 4L7.5 0.5" fill="none" stroke="#606060" stroke-width="1.2"/></svg>
<div class="a" style="left:818px;top:649px;width:333px;height:1px;background:#444"></div>
<div class="t" style="left:824px;top:661px;font-size:10px;color:#8e8e8e">Закрепить:</div>
<svg style="left:885px;top:658px" width="11" height="11"><rect x="0.5" y="0.5" width="10" height="10" fill="none" stroke="#8c8c8c" stroke-width="1"/><rect x="1" y="1" width="3" height="3" fill="#8c8c8c"/><rect x="7" y="1" width="3" height="3" fill="#8c8c8c"/><rect x="4" y="4" width="3" height="3" fill="#8c8c8c"/><rect x="1" y="7" width="3" height="3" fill="#8c8c8c"/><rect x="7" y="7" width="3" height="3" fill="#8c8c8c"/></svg>
<svg style="left:905px;top:657px" width="14" height="13"><path d="M13.5 0.5L7 7" stroke="#8c8c8c" stroke-width="2"/><path d="M6 6.5Q8 8 6.5 10Q5 12.5 0.5 12.5Q2 11 2.3 9.5Q3 7 6 6.5Z" fill="#8c8c8c"/></svg>
<svg style="left:928px;top:657px" width="13" height="13"><path d="M6.5 1V12M1 6.5H12" stroke="#8c8c8c" stroke-width="1.3"/><path d="M6.5 0L9 2.8H4ZM6.5 13L9 10.2H4ZM0 6.5L2.8 4V9ZM13 6.5L10.2 4V9Z" fill="#8c8c8c"/></svg>
<svg style="left:950px;top:657px" width="14" height="13"><path d="M3 0V10.5H13M0 3H10.5V13" fill="none" stroke="#8c8c8c" stroke-width="1.2"/><path d="M9 1.5H12.5V5" fill="none" stroke="#8c8c8c" stroke-width="0.9" stroke-dasharray="1 1"/></svg>
<svg style="left:974px;top:657px" width="11" height="13"><path d="M2.5 6V3.8Q2.5 0.8 5.5 0.8Q8.5 0.8 8.5 3.8V6" fill="none" stroke="#8c8c8c" stroke-width="1.5"/><rect x="0.5" y="5.5" width="10" height="7.5" fill="#8c8c8c"/></svg>
<div class="t" style="left:1051px;top:661px;font-size:10px;color:#8e8e8e">Заливка:</div>
<div class="a" style="left:1096px;top:656px;width:35px;height:16px;background:#4a4a4a;border:1px solid #585858"></div>
<div class="t" style="left:1100px;top:661px;font-size:10px;color:#7a7a7a">100%</div>
<div class="a" style="left:1131px;top:656px;width:15px;height:16px;border:1px solid #585858"></div>
<svg style="left:1135px;top:662px" width="8" height="5"><path d="M0.5 0.5L4 4L7.5 0.5" fill="none" stroke="#606060" stroke-width="1.2"/></svg>
<div class="a" style="left:818px;top:676px;width:318px;height:1px;background:#4a4a4a"></div>
<div class="a" style="left:818px;top:677px;width:333px;height:160px;background:#505050"></div>
<!-- layer row -->
<div class="a" style="left:848px;top:680px;width:288px;height:32px;background:#676767"></div>

<svg style="left:826px;top:693px" width="14" height="9"><path d="M0.5 4.5Q7 -2.5 13.5 4.5Q7 11.5 0.5 4.5Z" fill="#e6e6e6"/><circle cx="7" cy="4.5" r="2.3" fill="#535353"/><circle cx="7.4" cy="4" r="0.9" fill="#e6e6e6"/></svg>
<div class="a" style="left:851px;top:684px;width:34px;height:26px;background:#fff;border:1px solid #111"></div>
<div class="t" style="left:893px;top:692px;font-size:11px;font-style:italic;color:#f0f0f0">Фон</div>
<svg style="left:1109px;top:690px" width="11" height="13"><path d="M2.8 6V3.8Q2.8 1 5.5 1Q8.2 1 8.2 3.8V6" fill="none" stroke="#e0e0e0" stroke-width="1.2"/><rect x="0.6" y="5.6" width="9.8" height="6.8" fill="none" stroke="#e0e0e0" stroke-width="1.2"/><rect x="4.8" y="8" width="1.4" height="2" fill="#e0e0e0"/></svg>

<!-- layers footer -->
<div class="a" style="left:818px;top:837px;width:333px;height:1px;background:#474747"></div>
<svg style="left:949px;top:845px" width="15" height="9"><path d="M5.5 1H3.5Q0.8 1 0.8 4.5Q0.8 8 3.5 8H5.5M9.5 1H11.5Q14.2 1 14.2 4.5Q14.2 8 11.5 8H9.5M4.5 4.5H10.5" fill="none" stroke="#8a8a8a" stroke-width="1.3"/></svg>
<div class="t" style="left:977px;top:843px;font-size:14px;font-style:italic;color:#8a8a8a;font-family:'Liberation Serif',serif">fx</div>
<svg style="left:1003px;top:844px" width="14" height="10"><rect width="14" height="10" fill="#e0e0e0"/><circle cx="7" cy="5" r="3" fill="#535353"/></svg>
<svg style="left:1031px;top:843px" width="15" height="16"><circle cx="6" cy="6.5" r="5.3" fill="none" stroke="#e0e0e0" stroke-width="1.3"/><path d="M9.8 2.7A5.3 5.3 0 0 1 2.2 10.3Z" fill="#e0e0e0"/><path d="M10.5 13H14.5L12.5 15.5Z" fill="#e0e0e0"/></svg>
<svg style="left:1058px;top:844px" width="13" height="11"><path d="M0 0H5L6.5 1.8H13V11H0Z" fill="#e0e0e0"/><path d="M0 2.8H13" stroke="#535353" stroke-width="0.7"/></svg>
<svg style="left:1086px;top:843px" width="12" height="12"><rect x="0.6" y="0.6" width="10.8" height="10.8" fill="none" stroke="#e0e0e0" stroke-width="1.2"/><path d="M6 3V9M3 6H9" stroke="#e0e0e0" stroke-width="1.3"/></svg>
<svg style="left:1112px;top:843px" width="11" height="14"><path d="M0.5 2.5H10.5M3.5 2.5V0.5H7.5V2.5M1.5 3V13.5H9.5V3M3.8 5V11.5M5.5 5V11.5M7.2 5V11.5" fill="none" stroke="#8a8a8a" stroke-width="1"/></svg>
</body></html>
